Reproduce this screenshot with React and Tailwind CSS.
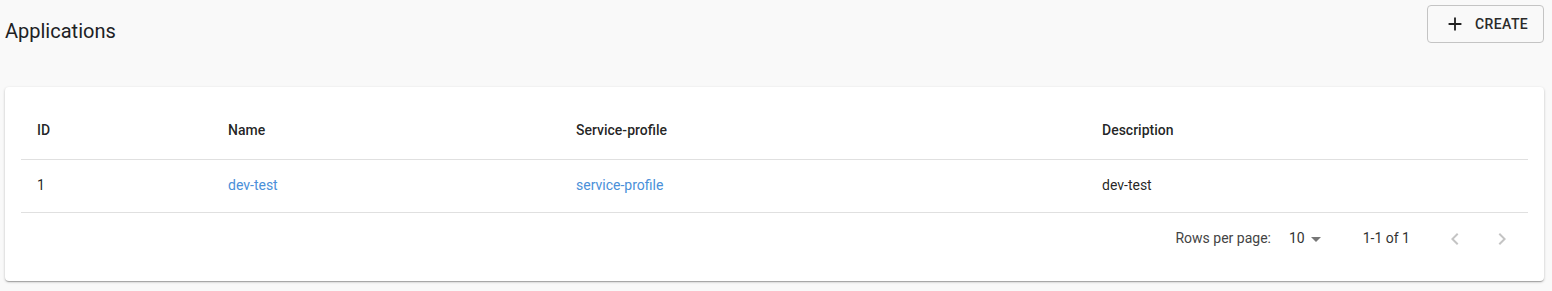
import React from "react";

const rows = [{ id: 1, name: "dev-test", profile: "service-profile", description: "dev-test" }];

const App = () => {
  return (
    <div className="min-h-[291px] bg-[#f9f9f9] font-['Roboto',sans-serif] text-[rgba(0,0,0,0.87)]">
      {/* Header */}
      <div className="flex items-start justify-between pl-[5px] pr-[8px] pt-[5px]">
        <h1 className="mt-[12px] text-[20px] leading-[28px] font-normal text-[#202124]">Applications</h1>
        <button className="flex h-[38px] w-[117px] items-center rounded-[4px] border border-[#c4c4c4] bg-[#f9f9f9] pl-[16px] text-[14px] font-medium tracking-[0.4px] text-[#2b2b2b]">
          <svg width="22" height="22" viewBox="0 0 24 24" className="mr-[9px]">
            <path d="M19 13h-6v6h-2v-6H5v-2h6V5h2v6h6v2z" fill="#222" />
          </svg>
          CREATE
        </button>
      </div>

      {/* Table card */}
      <div className="mx-[5px] mt-[42px] mr-[8px] rounded-[4px] bg-white p-[16px] shadow-[0_1px_3px_rgba(0,0,0,0.2),0_1px_1px_rgba(0,0,0,0.14),0_2px_1px_-1px_rgba(0,0,0,0.12)]">
        <table className="w-full border-collapse text-[14px]">
          <thead>
            <tr className="h-[56px] border-b border-[#e0e0e0]">
              <th className="w-[191px] px-[16px] text-left font-medium">ID</th>
              <th className="w-[348px] px-[16px] text-left font-medium">Name</th>
              <th className="w-[526px] px-[16px] text-left font-medium">Service-profile</th>
              <th className="px-[16px] text-left font-medium">Description</th>
            </tr>
          </thead>
          <tbody>
            {rows.map((r) => (
              <tr key={r.id} className="h-[53px] border-b border-[#e0e0e0]">
                <td className="px-[16px]">{r.id}</td>
                <td className="px-[16px] text-[#4a90d9]">{r.name}</td>
                <td className="px-[16px] text-[#4a90d9]">{r.profile}</td>
                <td className="px-[16px]">{r.description}</td>
              </tr>
            ))}
          </tbody>
        </table>

        {/* Pagination */}
        <div className="flex h-[52px] items-center justify-end pr-[14px] text-[14px] text-[#444]">
          <span>Rows per page:</span>
          <span className="ml-[18px] flex items-center text-[#333]">
            10
            <svg width="24" height="24" viewBox="0 0 24 24" className="ml-[-1px]">
              <path d="M7 10l5 5 5-5z" fill="#777" />
            </svg>
          </span>
          <span className="ml-[35px] text-[#333]">1-1 of 1</span>
          <svg width="24" height="24" viewBox="0 0 24 24" className="ml-[33px]">
            <path d="M15.41 7.41L14 6l-6 6 6 6 1.41-1.41L10.83 12z" fill="#c4c4c4" />
          </svg>
          <svg width="24" height="24" viewBox="0 0 24 24" className="ml-[23px]">
            <path d="M10 6L8.59 7.41 13.17 12l-4.58 4.59L10 18l6-6z" fill="#c4c4c4" />
          </svg>
        </div>
      </div>
    </div>
  );
};

export default App;
